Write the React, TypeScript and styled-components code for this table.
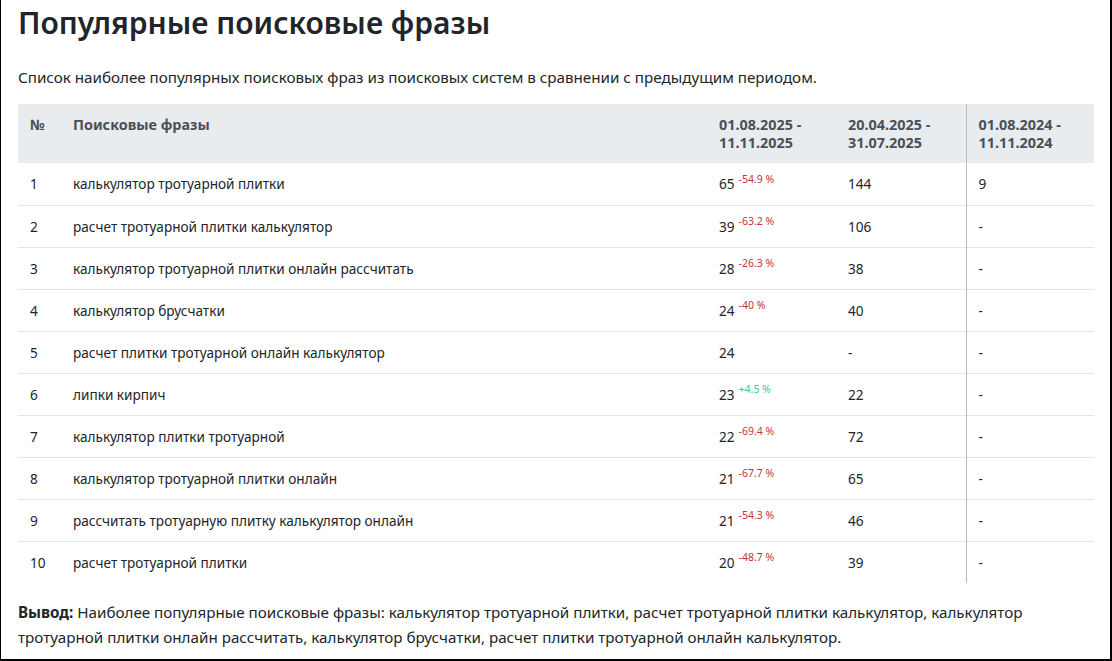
import React from "react";
import styled, { createGlobalStyle } from "styled-components";

const Global = createGlobalStyle`
  html, body { margin: 0; padding: 0; background: #fff; }
  body { font-family: "Noto Sans", "Open Sans", sans-serif; color: #212529; }
  * { box-sizing: border-box; }
`;

const Frame = styled.div`
  width: 1112px;
  height: 661px;
  border-left: 1px solid #000;
  border-right: 2px solid #000;
  border-bottom: 2px solid #000;
  padding: 0 16px 0 17px;
  overflow: hidden;
`;

const Title = styled.h1`
  margin: 0;
  padding-top: 3px;
  font-size: 30px;
  font-weight: 600;
  line-height: 40px;
  color: #212529;
`;

const Lead = styled.p`
  margin: 23px 0 16px;
  font-size: 15.2px;
  line-height: 22px;
`;

const Table = styled.table`
  width: 100%;
  border-collapse: collapse;
  table-layout: fixed;
  font-size: 13.6px;
`;

const Th = styled.th<{ $w: number; $sep?: boolean }>`
  width: ${(p) => p.$w}px;
  height: 59px;
  background: #e9ecef;
  color: #495057;
  font-size: 14.4px;
  font-weight: 700;
  text-align: left;
  vertical-align: top;
  padding: 12px 12px;
  line-height: 17.5px;
  border-left: ${(p) => (p.$sep ? "1px solid #bdbdbd" : "none")};
`;

const Tr = styled.tr`
  & + & td { border-top: 1px solid #e3e6e9; }
`;

const Td = styled.td<{ $sep?: boolean }>`
  padding: 10px 12px;
  height: 42px;
  line-height: 21px;
  vertical-align: middle;
  border-left: ${(p) => (p.$sep ? "1px solid #bdbdbd" : "none")};
`;

const Delta = styled.sup<{ $up: boolean }>`
  font-size: 10.5px;
  line-height: 0;
  margin-left: 4px;
  position: relative;
  top: -1px;
  color: ${(p) => (p.$up ? "#35c9a6" : "#c8333a")};
`;

const Conclusion = styled.p`
  margin: 17px 0 0;
  font-size: 15.2px;
  line-height: 25px;
`;

type Row = [string, number, string | null, string, string];
const rows: Row[] = [
  ["калькулятор тротуарной плитки", 65, "-54.9 %", "144", "9"],
  ["расчет тротуарной плитки калькулятор", 39, "-63.2 %", "106", "-"],
  ["калькулятор тротуарной плитки онлайн рассчитать", 28, "-26.3 %", "38", "-"],
  ["калькулятор брусчатки", 24, "-40 %", "40", "-"],
  ["расчет плитки тротуарной онлайн калькулятор", 24, null, "-", "-"],
  ["липки кирпич", 23, "+4.5 %", "22", "-"],
  ["калькулятор плитки тротуарной", 22, "-69.4 %", "72", "-"],
  ["калькулятор тротуарной плитки онлайн", 21, "-67.7 %", "65", "-"],
  ["рассчитать тротуарную плитку калькулятор онлайн", 21, "-54.3 %", "46", "-"],
  ["расчет тротуарной плитки", 20, "-48.7 %", "39", "-"],
];

export default function App() {
  return (
    <>
      <Global />
      <Frame>
        <Title>Популярные поисковые фразы</Title>
        <Lead>
          Список наиболее популярных поисковых фраз из поисковых систем в сравнении с предыдущим периодом.
        </Lead>
        <Table>
          <thead>
            <tr>
              <Th $w={43}>№</Th>
              <Th $w={646}>Поисковые фразы</Th>
              <Th $w={129}>01.08.2025 -<br />11.11.2025</Th>
              <Th $w={130}>20.04.2025 -<br />31.07.2025</Th>
              <Th $w={128} $sep>01.08.2024 -<br />11.11.2024</Th>
            </tr>
          </thead>
          <tbody>
            {rows.map((r, i) => (
              <Tr key={i}>
                <Td>{i + 1}</Td>
                <Td>{r[0]}</Td>
                <Td>
                  {r[1]}
                  {r[2] && <Delta $up={r[2].startsWith("+")}>{r[2]}</Delta>}
                </Td>
                <Td>{r[3]}</Td>
                <Td $sep>{r[4]}</Td>
              </Tr>
            ))}
          </tbody>
        </Table>
        <Conclusion>
          <b>Вывод:</b> Наиболее популярные поисковые фразы: калькулятор тротуарной плитки, расчет тротуарной плитки калькулятор, калькулятор тротуарной плитки онлайн рассчитать, калькулятор брусчатки, расчет плитки тротуарной онлайн калькулятор.
        </Conclusion>
      </Frame>
    </>
  );
}
